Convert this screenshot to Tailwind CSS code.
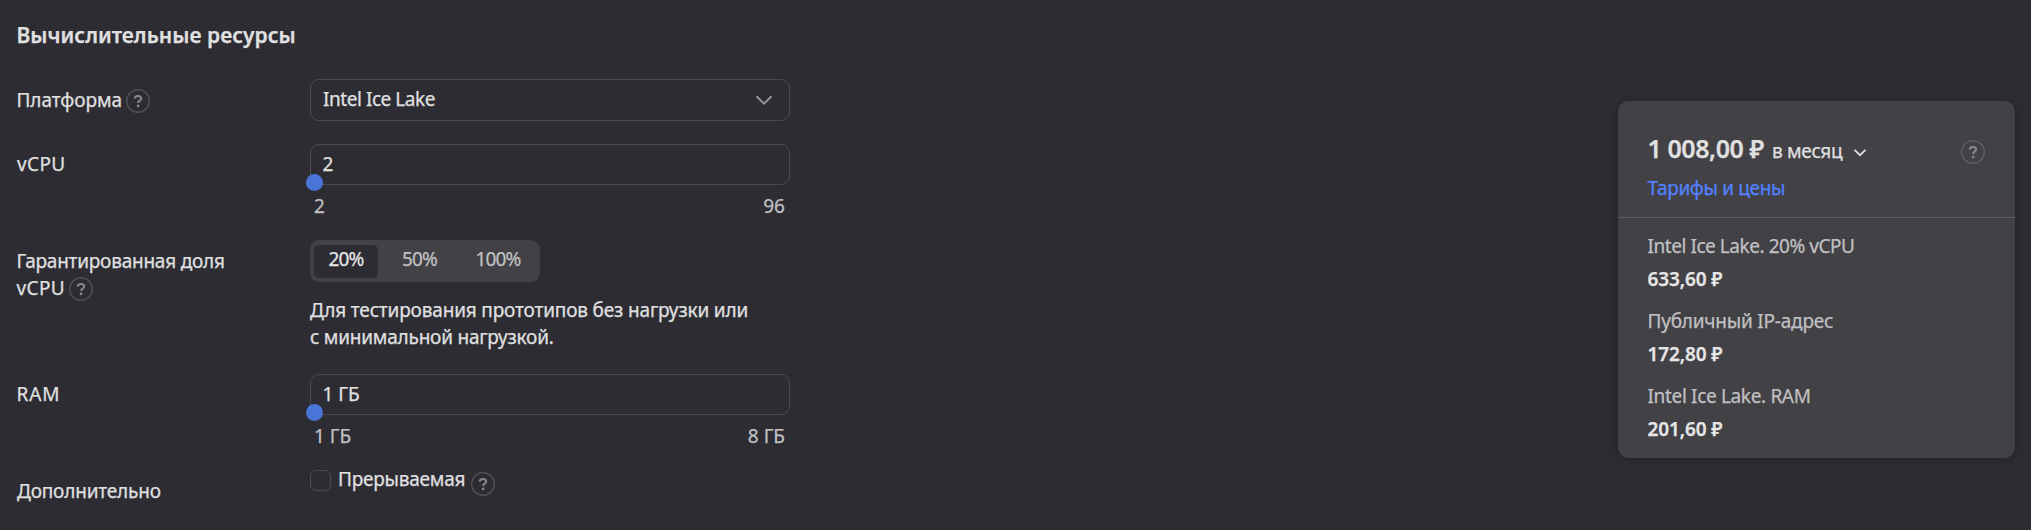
<!DOCTYPE html>
<html lang="ru">
<head>
<meta charset="utf-8">
<title>Вычислительные ресурсы</title>
<script src="https://cdn.jsdelivr.net/npm/@tailwindcss/browser@4"></script>
</head>
<body class="flex h-[530px] w-[2031px] justify-between overflow-hidden bg-[#2d2c33] font-['Noto_Sans',sans-serif] text-[19px] leading-[27px] whitespace-nowrap text-[#e0e0e1] [-webkit-text-stroke:0.25px]">
<svg class="hidden">
  <symbol id="help" viewBox="0 0 24 24">
    <circle cx="12" cy="12" r="11.3" fill="none" stroke="currentColor" stroke-opacity=".4" stroke-width="1.4"/>
    <path d="M8.700 9.600C8.800 7.700 10.100 6.900 12 6.900c1.900 0 3.200 1 3.200 2.500 0 2.200-3.100 2.200-3.100 4.600" fill="none" stroke="currentColor" stroke-width="2"/>
    <circle cx="12.1" cy="16.900" r="1.350" fill="currentColor"/>
  </symbol>
</svg>

<main class="w-[790px] pl-4">
  <h1 class="h-[79px] pt-[22px] pl-[0.5px] text-[21px] leading-[27px] font-semibold tracking-[0.03px]">Вычислительные ресурсы</h1>

  <div class="flex h-[65px]">
    <div class="flex w-[294px] items-start pt-[8px] pl-[0.5px]">
      <span class="w-[109.5px] tracking-[-0.06px]">Платформа</span>
      <svg class="mt-[2px] size-6 text-[#88878b]"><use href="#help"/></svg>
    </div>
    <div class="flex h-[42px] w-[480px] justify-between rounded-[9px] border border-[#4b4a50] pt-[6px] pr-[16px] pl-[12px]">
      <span class="tracking-[-0.45px]">Intel Ice Lake</span>
      <svg class="mt-[8px] size-[18px]" viewBox="0 0 18 18" fill="none" stroke="#96959a" stroke-width="2"><path d="M1.5 2.3 9 9.6l7.500-7.300"/></svg>
    </div>
  </div>

  <div class="flex h-[96px]">
    <div class="w-[294px] pt-[7px] pl-[1px] tracking-[0.4px]">vCPU</div>
    <div class="w-[480px]">
      <div class="relative h-[41px] rounded-[9px] border border-[#4b4a50] pt-[6px] pl-[11.500px]">2
        <i class="absolute top-[29px] left-[-5px] size-[17px] rounded-full bg-[#4b74d8]"></i>
      </div>
      <div class="flex justify-between pt-[8px] pr-[5px] pl-[4px] text-[#c0c0c2]"><span>2</span><span>96</span></div>
    </div>
  </div>

  <div class="flex h-[134px]">
    <div class="w-[294px] pt-[8px] pl-[0.5px]">
      <div class="tracking-[-0.23px]">Гарантированная доля</div>
      <div class="flex"><span class="w-[52.5px] tracking-[0.4px]">vCPU</span><svg class="mt-[2px] size-6 text-[#88878b]"><use href="#help"/></svg></div>
    </div>
    <div>
      <div class="flex h-[42px] w-[230px] rounded-[9px] bg-[#424146] px-[4px] pt-[5px] pb-[4px] tracking-[-0.9px] text-[#c0c0c2]">
        <span class="flex w-[64px] items-start justify-center rounded-[5px] bg-[#2d2c33] pt-px text-[#e6e6e7]">20%</span>
        <span class="w-[83px] pt-px text-center">50%</span>
        <span class="w-[74px] pt-px text-center">100%</span>
      </div>
      <div class="pt-[15px] tracking-[-0.16px]">Для тестирования прототипов без нагрузки или</div>
      <div class="tracking-[-0.22px]">с минимальной нагрузкой.</div>
    </div>
  </div>

  <div class="flex h-[96px]">
    <div class="w-[294px] pt-[7px] pl-[0.5px] tracking-[0.9px]">RAM</div>
    <div class="w-[480px]">
      <div class="relative h-[41px] rounded-[9px] border border-[#4b4a50] pt-[6px] pl-[11.500px]">1 ГБ
        <i class="absolute top-[29px] left-[-5px] size-[17px] rounded-full bg-[#4b74d8]"></i>
      </div>
      <div class="flex justify-between pt-[8px] pr-[5px] pl-[4px] text-[#c0c0c2]"><span>1 ГБ</span><span>8 ГБ</span></div>
    </div>
  </div>

  <div class="flex items-start">
    <div class="w-[294px] pt-[8px] pl-px tracking-[-0.18px]">Дополнительно</div>
    <i class="size-[21px] rounded-[6px] border border-[#4b4a50]"></i>
    <span class="-mt-[4px] w-[140px] pl-[7px] tracking-[-0.23px]">Прерываемая</span>
    <svg class="mt-[2px] size-6 text-[#88878b]"><use href="#help"/></svg>
  </div>
</main>

<aside class="mt-[101px] mr-[16px] h-[357px] w-[397px] rounded-[11px] bg-[#424146] shadow-[0_2px_10px_rgba(0,0,0,0.22)]">
  <div class="h-[117px] border-b border-[#5e5d62] pr-[30px] pl-[29.500px] pt-[37px]">
    <div class="flex h-[37px] items-start">
      <span class="-mt-[3px] w-[124.500px] text-[25px] font-semibold tracking-[-0.42px]">1 008,00 ₽</span>
      <span class="w-[81px] tracking-[-0.32px]">в месяц</span>
      <svg class="mt-[8px] size-[14px]" viewBox="0 0 14 14" fill="none" stroke="#e0e0e1" stroke-width="1.800"><path d="m1.500 3.800 5.500 5.400 5.500-5.400"/></svg>
      <svg class="ml-auto mt-[2px] size-6 text-[#88878b]"><use href="#help"/></svg>
    </div>
    <a class="tracking-[-0.34px] text-[#5282ff]">Тарифы и цены</a>
  </div>
  <div class="pl-[29.500px] pt-[15px] text-[#c0c0c2]">
    <div class="h-[33px] tracking-[-0.45px]">Intel Ice Lake. 20% vCPU</div>
    <div class="h-[42px] font-semibold tracking-[-0.11px] text-[#e6e6e7]">633,60 ₽</div>
    <div class="h-[33px] tracking-[-0.21px]">Публичный IP-адрес</div>
    <div class="h-[42px] font-semibold tracking-[-0.11px] text-[#e6e6e7]">172,80 ₽</div>
    <div class="h-[33px] tracking-[-0.34px]">Intel Ice Lake. RAM</div>
    <div class="h-[42px] font-semibold tracking-[-0.11px] text-[#e6e6e7]">201,60 ₽</div>
  </div>
</aside>
</body>
</html>
